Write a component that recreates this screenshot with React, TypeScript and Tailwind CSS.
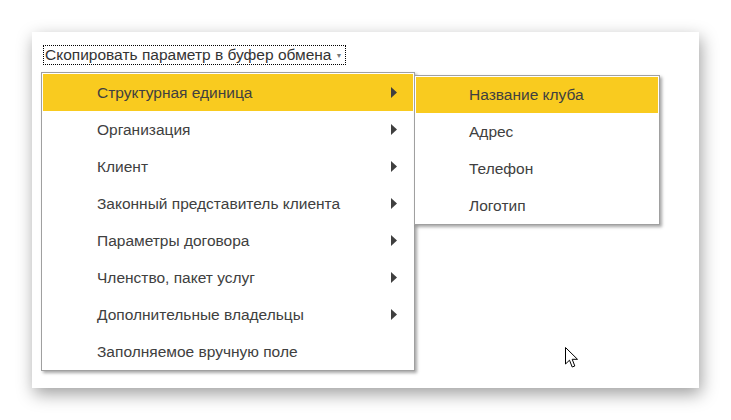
import React from 'react';

const mainItems = [
  { label: 'Структурная единица', sub: true },
  { label: 'Организация', sub: true },
  { label: 'Клиент', sub: true },
  { label: 'Законный представитель клиента', sub: true },
  { label: 'Параметры договора', sub: true },
  { label: 'Членство, пакет услуг', sub: true },
  { label: 'Дополнительные владельцы', sub: true },
  { label: 'Заполняемое вручную поле', sub: false },
];

const subItems = ['Название клуба', 'Адрес', 'Телефон', 'Логотип'];

function Arrow() {
  return (
    <svg width="6" height="11" viewBox="0 0 6 11" className="mr-[16px] shrink-0">
      <path d="M0 0 L6 5.5 L0 11 Z" fill="#3f3f3f" />
    </svg>
  );
}

export default function App() {
  return (
    <div className="w-[731px] h-[420px] bg-white pt-8 pl-8 font-['Liberation_Sans',Arial,sans-serif]">
      <div className="relative w-[667px] h-[356px] bg-white pt-[13px] pl-[11px] shadow-[2px_6px_16px_rgba(0,0,0,0.38)]">
        {/* кнопка */}
        <div className="flex w-fit items-center h-[20px] border border-dotted border-black pl-px pr-[3px] text-[15.5px] leading-[18px] text-[#333]">
          Скопировать параметр в буфер обмена
          <span className="ml-[4px] text-[7px] leading-none text-[#777]">▼</span>
        </div>

        {/* меню */}
        <div className="flex items-start mt-[7px] -ml-[2px]">
          <div className="w-[374px] border border-[#a0a0a0] px-px pt-px bg-white shadow-[2px_2px_3px_rgba(0,0,0,0.35)]">
            {mainItems.map((item, i) => (
              <div
                key={item.label}
                className={
                  i === 0
                    ? 'flex items-center h-[37px] pl-[54px] bg-[#f9cb1f] text-[15.5px] text-[#404040]'
                    : 'flex items-center h-[37px] pl-[54px] text-[15.5px] text-[#404040]'
                }
              >
                <span className="flex-1">{item.label}</span>
                {item.sub && <Arrow />}
              </div>
            ))}
          </div>

          <div className="relative z-10 -ml-px mt-[3px] w-[246px] border border-[#a0a0a0] px-px pt-px bg-white shadow-[2px_2px_3px_rgba(0,0,0,0.35)]">
            {subItems.map((s, i) => (
              <div
                key={s}
                className={
                  i === 0
                    ? 'flex items-center h-[36px] pl-[53px] bg-[#f9cb1f] text-[15.5px] text-[#404040]'
                    : 'flex items-center h-[37px] pl-[53px] text-[15.5px] text-[#404040]'
                }
              >
                {s}
              </div>
            ))}
          </div>
        </div>

        {/* курсор */}
        <svg
          width="14"
          height="22"
          viewBox="0 0 14 22"
          className="absolute left-[533px] top-[315px]"
        >
          <path
            d="M0.5 0.5 L0.5 17 L4.5 13.2 L7.2 20 L9.8 19 L7.2 12.3 L12.5 12.3 Z"
            fill="#fff"
            stroke="#000"
            strokeWidth="1"
            strokeLinejoin="miter"
          />
        </svg>
      </div>
    </div>
  );
}
